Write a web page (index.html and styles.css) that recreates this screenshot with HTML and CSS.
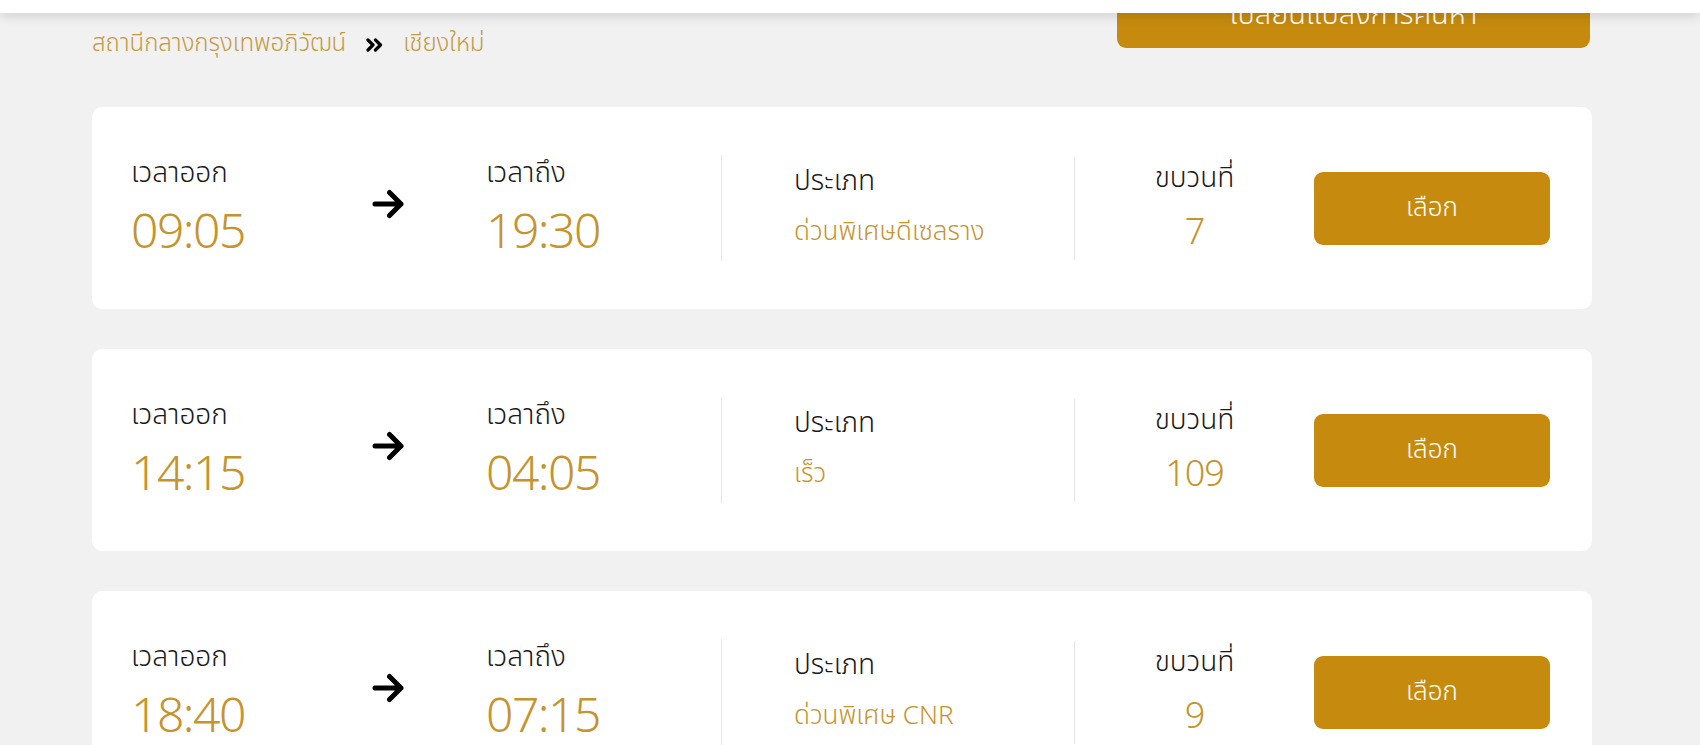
FILE: index.html
```html
<!DOCTYPE html>
<html lang="th">
<head>
<meta charset="utf-8">
<title>เลือกขบวนรถ</title>
<link rel="stylesheet" href="styles.css">
</head>
<body>
<header class="topbar"></header>
<main class="page">
  <div class="toolbar">
    <nav class="crumbs">
      <span class="crumb">สถานีกลางกรุงเทพอภิวัฒน์</span>
      <svg class="crumb-sep" width="17" height="14" viewBox="0 0 17 14"><path d="M2 2 L7 7 L2 12 M9.5 2 L14.5 7 L9.5 12" fill="none" stroke="#000" stroke-width="3.2" stroke-linecap="round" stroke-linejoin="round"/></svg>
      <span class="crumb">เชียงใหม่</span>
    </nav>
    <button class="btn btn-change">เปลี่ยนแปลงการค้นหา</button>
  </div>

  <section class="card">
    <div class="col col-time"><div class="label">เวลาออก</div><div class="time">09:05</div></div>
    <div class="col col-arrow"><svg width="34" height="30" viewBox="0 0 34 30"><path d="M3 15 H29 M17.5 3.5 L29 15 L17.5 26.5" fill="none" stroke="#000" stroke-width="5" stroke-linecap="round" stroke-linejoin="round"/></svg></div>
    <div class="col col-time col-div"><div class="label">เวลาถึง</div><div class="time">19:30</div></div>
    <div class="col col-type col-div"><div class="label">ประเภท</div><div class="value">ด่วนพิเศษดีเซลราง</div></div>
    <div class="col col-no"><div class="label">ขบวนที่</div><div class="value">7</div></div>
    <div class="col col-btn"><button class="btn btn-select">เลือก</button></div>
  </section>

  <section class="card">
    <div class="col col-time"><div class="label">เวลาออก</div><div class="time">14:15</div></div>
    <div class="col col-arrow"><svg width="34" height="30" viewBox="0 0 34 30"><path d="M3 15 H29 M17.5 3.5 L29 15 L17.5 26.5" fill="none" stroke="#000" stroke-width="5" stroke-linecap="round" stroke-linejoin="round"/></svg></div>
    <div class="col col-time col-div"><div class="label">เวลาถึง</div><div class="time">04:05</div></div>
    <div class="col col-type col-div"><div class="label">ประเภท</div><div class="value">เร็ว</div></div>
    <div class="col col-no"><div class="label">ขบวนที่</div><div class="value">109</div></div>
    <div class="col col-btn"><button class="btn btn-select">เลือก</button></div>
  </section>

  <section class="card">
    <div class="col col-time"><div class="label">เวลาออก</div><div class="time">18:40</div></div>
    <div class="col col-arrow"><svg width="34" height="30" viewBox="0 0 34 30"><path d="M3 15 H29 M17.5 3.5 L29 15 L17.5 26.5" fill="none" stroke="#000" stroke-width="5" stroke-linecap="round" stroke-linejoin="round"/></svg></div>
    <div class="col col-time col-div"><div class="label">เวลาถึง</div><div class="time">07:15</div></div>
    <div class="col col-type col-div"><div class="label">ประเภท</div><div class="value">ด่วนพิเศษ CNR</div></div>
    <div class="col col-no"><div class="label">ขบวนที่</div><div class="value">9</div></div>
    <div class="col col-btn"><button class="btn btn-select">เลือก</button></div>
  </section>
</main>
</body>
</html>
```
FILE: styles.css
```css
html, body {
  margin: 0;
  padding: 0;
  background: #f1f1f1;
  overflow: hidden;
  height: 745px;
}
body {
  font-family: "Noto Sans Thai", "Noto Sans", sans-serif;
  font-weight: 300;
  color: #1a1a1a;
}
.topbar {
  position: fixed;
  top: 0;
  left: 0;
  right: 0;
  height: 13px;
  background: #fff;
  box-shadow: 0 3px 12px rgba(0,0,0,0.14);
  z-index: 10;
}
.page {
  width: 1500px;
  margin-left: 92px;
  margin-top: -25px;
}
.toolbar {
  display: flex;
  justify-content: space-between;
  align-items: flex-start;
  height: 73px;
  margin-bottom: 59px;
}
.crumbs {
  display: flex;
  align-items: center;
  gap: 20px;
  padding-top: 54px;
}
.crumb {
  color: #c49a45;
  font-size: 24px;
  line-height: 30px;
}
.crumb-sep {
  margin-top: 2px;
}
.btn {
  border: 0;
  background: #c68b0e;
  color: #fff;
  font-family: inherit;
  font-weight: 350;
  border-radius: 9px;
  cursor: pointer;
}
.btn-change {
  width: 473px;
  height: 73px;
  margin-right: 2px;
  padding-top: 8px;
  font-size: 29px;
}
.card {
  background: #fff;
  border-radius: 10px;
  height: 202px;
  box-sizing: border-box;
  padding: 0 42px 0 39px;
  margin-bottom: 40px;
  display: grid;
  grid-template-columns: 241px 114px 236px 353px 239px 236px;
  align-items: center;
}
.col-time {
  padding-top: 3px;
}
.col-div {
  border-right: 1px solid #e6e6e6;
  height: 103px;
  display: flex;
  flex-direction: column;
  justify-content: center;
}
.col-type {
  padding-left: 72px;
  padding-top: 6px;
  box-sizing: border-box;
}
.col-no {
  text-align: center;
  padding-top: 4px;
}
.col-arrow {
  display: flex;
  align-items: center;
  margin-top: -9px;
}
.label {
  font-size: 28px;
  line-height: 34px;
  font-weight: 300;
}
.time {
  font-size: 48px;
  line-height: 58px;
  letter-spacing: -1.5px;
  margin-top: 14px;
  color: #c6942d;
}
.value {
  font-size: 26px;
  line-height: 50px;
  margin-top: 8px;
  color: #c6942d;
}
.col-no .value {
  font-size: 36px;
  letter-spacing: -1px;
  margin-top: 12px;
}
.btn-select {
  width: 236px;
  height: 73px;
  font-size: 26px;
}
```
